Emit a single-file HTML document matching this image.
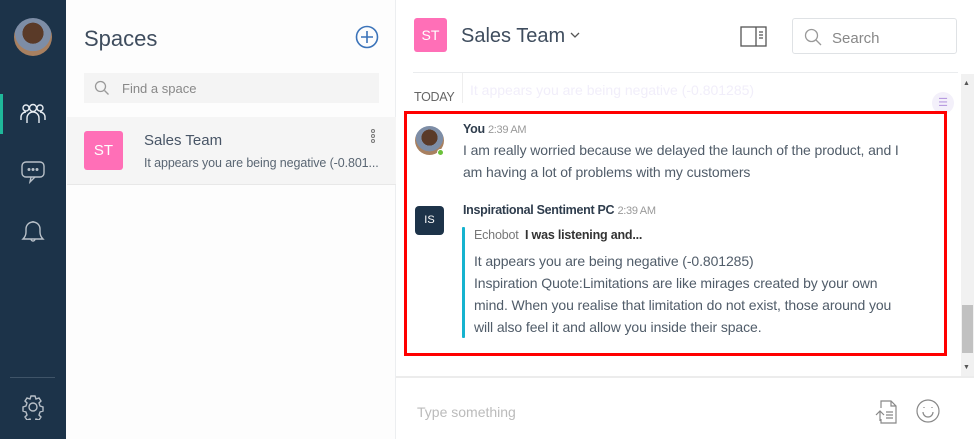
<!DOCTYPE html>
<html><head><style>
*{margin:0;padding:0;box-sizing:border-box}
body{width:974px;height:439px;overflow:hidden;font-family:"Liberation Sans",sans-serif;background:#fff;position:relative;color:#3d4b5c}
.abs{position:absolute}
</style></head><body>
<div class="abs" style="left:0;top:0;width:66px;height:439px;background:#1c3349"></div>
<div class="abs" style="left:14px;top:18px;width:38px;height:38px;border-radius:50%;background:radial-gradient(circle at 50% 40%,#5a3a28 0 35%,#7d8da6 36% 60%,#a88060 61%)"></div>
<div class="abs" style="left:0;top:94px;width:3px;height:40px;background:#1fb89a"></div>
<svg class="abs" style="left:20px;top:100px" width="26" height="26" viewBox="0 0 26 26" fill="none" stroke="#e8edf2" stroke-width="1.4"><circle cx="13" cy="8" r="3.5"/><circle cx="6" cy="8" r="3"/><circle cx="20" cy="8" r="3"/><path d="M7 23v-5a6 6 0 0 1 12 0v5M1 20v-3a5 5 0 0 1 5-5M25 20v-3a5 5 0 0 0-5-5"/></svg>
<svg class="abs" style="left:20px;top:160px" width="26" height="24" viewBox="0 0 26 24" fill="none" stroke="#b8c0c8" stroke-width="1.4"><rect x="2" y="2" width="22" height="15" rx="4"/><path d="M11 17l-1 5 5-5"/><circle cx="9" cy="9.5" r=".8" fill="#b8c0c8"/><circle cx="13" cy="9.5" r=".8" fill="#b8c0c8"/><circle cx="17" cy="9.5" r=".8" fill="#b8c0c8"/></svg>
<svg class="abs" style="left:20px;top:218px" width="26" height="26" viewBox="0 0 26 26" fill="none" stroke="#b8c0c8" stroke-width="1.4"><path d="M3 21h20c-2-2-3-4-3-7v-3a7 7 0 0 0-14 0v3c0 3-1 5-3 7zM11 21a2 2 0 0 0 4 0M13 3v1"/></svg>
<div class="abs" style="left:10px;top:377px;width:45px;height:1px;background:#3f5468"></div>
<svg class="abs" style="left:20px;top:394px" width="26" height="26" viewBox="0 0 26 26" fill="none" stroke="#b8c0c8" stroke-width="1.4"><circle cx="13" cy="13" r="4"/><path d="M11 2h4l1 3 3-1 2 3-2 2 1 3 3 1v4l-3 1-1 3 2 2-2 3-3-1-1 3h-4l-1-3-3 1-2-3 2-2-1-3-3-1v-4l3-1 1-3-2-2 2-3 3 1z"/></svg>

<div class="abs" style="left:66px;top:0;width:330px;height:439px;background:#fdfdfd;border-right:1px solid #eceef0"></div>
<div class="abs" style="left:84px;top:26px;font-size:22px;color:#3f4d5e">Spaces</div>
<svg class="abs" style="left:355px;top:25px" width="24" height="24" viewBox="0 0 24 24" fill="none" stroke="#3b73b9" stroke-width="1.6"><circle cx="12" cy="12" r="10.5"/><path d="M12 6v12M6 12h12"/></svg>
<div class="abs" style="left:84px;top:73px;width:295px;height:30px;background:#f4f4f4"></div>
<svg class="abs" style="left:94px;top:80px" width="16" height="16" viewBox="0 0 16 16" fill="none" stroke="#999" stroke-width="1.3"><circle cx="6.5" cy="6.5" r="5"/><path d="M10.5 10.5l4 4"/></svg>
<div class="abs" style="left:122px;top:81px;font-size:13px;color:#888">Find a space</div>
<div class="abs" style="left:67px;top:117px;width:329px;height:68px;background:#f5f5f5;border-bottom:1px solid #e8e8e8"></div>
<div class="abs" style="left:84px;top:131px;width:39px;height:39px;border-radius:3px;background:#ff6fb7;color:#fff;font-size:15px;text-align:center;line-height:39px">ST</div>
<div class="abs" style="left:144px;top:132px;font-size:15px;color:#485566">Sales Team</div>
<div class="abs" style="left:144px;top:156px;font-size:12.5px;color:#5a6673;letter-spacing:-0.1px;white-space:nowrap">It appears you are being negative (-0.801...</div>
<div class="abs" style="left:371px;top:129px;width:4px;font-size:0">
<div style="width:4px;height:4px;border:1px solid #777;border-radius:50%;margin-bottom:1px"></div><div style="width:4px;height:4px;border:1px solid #777;border-radius:50%;margin-bottom:1px"></div><div style="width:4px;height:4px;border:1px solid #777;border-radius:50%"></div></div>

<div class="abs" style="left:414px;top:18px;width:33px;height:34px;border-radius:3px;background:#ff6fb7;color:#fff;font-size:14px;text-align:center;line-height:34px">ST</div>
<div class="abs" style="left:461px;top:25px;font-size:20px;color:#3f4d5e">Sales Team</div>
<svg class="abs" style="left:569px;top:31px" width="12" height="8" viewBox="0 0 12 8" fill="none" stroke="#555" stroke-width="1.3"><path d="M2 2l4 4 4-4"/></svg>
<svg class="abs" style="left:740px;top:26px" width="28" height="22" viewBox="0 0 28 22" fill="none" stroke="#555" stroke-width="1.3"><rect x="1" y="1" width="25" height="19"/><path d="M16 1v19M19 6h4M19 9h4M19 12h4"/></svg>
<div class="abs" style="left:792px;top:18px;width:165px;height:36px;border:1px solid #dfe2e5;border-radius:3px"></div>
<svg class="abs" style="left:804px;top:28px" width="18" height="18" viewBox="0 0 18 18" fill="none" stroke="#999" stroke-width="1.3"><circle cx="7.5" cy="7.5" r="6"/><path d="M12 12l5 5"/></svg>
<div class="abs" style="left:832px;top:30px;font-size:15px;color:#888">Search</div>
<div class="abs" style="left:413px;top:72px;width:545px;height:1px;background:#eaecee"></div>
<div class="abs" style="left:961px;top:74px;width:13px;height:303px;background:#f1f1f1"></div>
<div class="abs" style="left:962px;top:305px;width:11px;height:48px;background:#c1c1c1"></div>
<div class="abs" style="left:963px;top:80px;font-size:7px;color:#555">▲</div>
<div class="abs" style="left:963px;top:364px;font-size:7px;color:#555">▼</div>
<div class="abs" style="left:414px;top:90px;font-size:12.5px;color:#666;letter-spacing:-0.3px">TODAY</div>
<div class="abs" style="left:462px;top:73px;width:1px;height:30px;background:#eee"></div>
<div class="abs" style="left:470px;top:82px;font-size:14px;color:#f1eefa">It appears you are being negative (-0.801285)</div>
<div class="abs" style="left:932px;top:92px;width:22px;height:22px;border-radius:50%;background:#f3f0fa;color:#b89be0;font-size:11px;text-align:center;line-height:22px">☰</div>
<div class="abs" style="left:396px;top:376px;width:578px;height:2px;background:#ececec"></div>

<div class="abs" style="left:404px;top:111px;width:543px;height:245px;border:3px solid #ff0000"></div>
<div class="abs" style="left:415px;top:126px;width:29px;height:29px;border-radius:50%;background:radial-gradient(circle at 50% 40%,#5a3a28 0 35%,#7d8da6 36% 60%,#a88060 61%)"></div>
<div class="abs" style="left:437px;top:149px;width:7px;height:7px;border-radius:50%;background:#6bc13a;border:1px solid #fff"></div>
<div class="abs" style="left:463px;top:122px;font-size:12.5px;letter-spacing:-0.3px"><b style="color:#2f3d4d">You</b> <span style="font-size:11px;color:#999">2:39 AM</span></div>
<div class="abs" style="left:463px;top:139px;width:452px;font-size:14px;line-height:22px;color:#505c69;letter-spacing:-0.1px">I am really worried because we delayed the launch of the product, and I am having a lot of problems with my customers</div>
<div class="abs" style="left:415px;top:206px;width:29px;height:29px;border-radius:4px;background:#1d3349;color:#fff;font-size:11px;text-align:center;line-height:29px">IS</div>
<div class="abs" style="left:463px;top:203px;font-size:12.5px;letter-spacing:-0.3px"><b style="color:#2f3d4d">Inspirational Sentiment PC</b> <span style="font-size:11px;color:#999">2:39 AM</span></div>
<div class="abs" style="left:462px;top:227px;width:3px;height:111px;background:#16b3cf;border-radius:1px"></div>
<div class="abs" style="left:474px;top:228px;font-size:12.5px;color:#777;letter-spacing:-0.2px">Echobot&nbsp; <b style="color:#333">I was listening and...</b></div>
<div class="abs" style="left:474px;top:250px;width:435px;font-size:14px;line-height:22px;color:#505c69;letter-spacing:-0.1px">It appears you are being negative (-0.801285)<br>Inspiration Quote:Limitations are like mirages created by your own mind. When you realise that limitation do not exist, those around you will also feel it and allow you inside their space.</div>

<div class="abs" style="left:417px;top:404px;font-size:14px;color:#bbb">Type something</div>
<svg class="abs" style="left:874px;top:399px" width="24" height="26" viewBox="0 0 24 26" fill="none" stroke="#888" stroke-width="1.2"><path d="M7 9V2h10l5 5v17H7v-4M17 2v5h5M12 13h7M12 16h7M12 19h7M6 12v10M2 16l4-4 4 4"/></svg>
<svg class="abs" style="left:915px;top:398px" width="26" height="26" viewBox="0 0 26 26" fill="none" stroke="#888" stroke-width="1.2"><circle cx="13" cy="13" r="11"/><path d="M8 14a5 5 0 0 0 10 0M9 9v1M17 9v1"/></svg>
</body></html>
